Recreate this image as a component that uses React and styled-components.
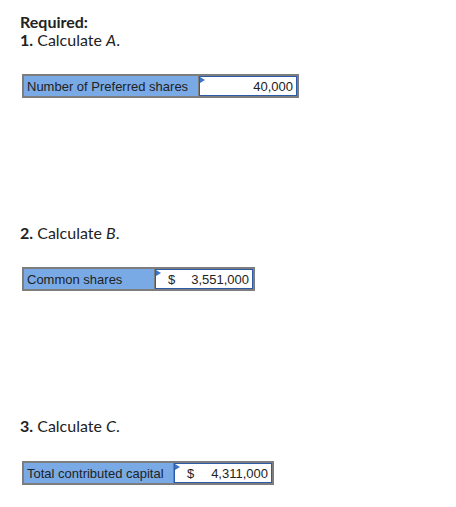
import React from "react";
import styled, { createGlobalStyle } from "styled-components";

const Global = createGlobalStyle`
  html, body { margin: 0; padding: 0; background: #fff; }
  body { font-family: Lato, "Open Sans", sans-serif; color: #222; }
`;

const Page = styled.div`
  width: 456px;
  height: 507px;
  padding: 13px 0 0 20px;
  box-sizing: border-box;
`;

const Line = styled.div`
  font-size: 16px;
  line-height: 18px;
  margin-top: ${(p) => p.$mt || 0}px;
`;

const Bold = styled.span`
  font-weight: 700;
`;

const Row = styled.div`
  display: flex;
  width: max-content;
  margin-top: ${(p) => p.$mt || 0}px;
  margin-left: 2px;
  border: 2px solid #7d7d7d;
  font-family: "Liberation Sans", Arial, sans-serif;
  font-size: 13px;
  color: #222;
  height: 20px;
`;

const Label = styled.div`
  width: ${(p) => p.$w}px;
  box-sizing: border-box;
  background: #79aae6;
  padding-left: 3px;
  display: flex;
  align-items: center;
  border-right: 1px solid #7d7d7d;
`;

const Input = styled.div`
  position: relative;
  width: 98px;
  box-sizing: border-box;
  border: 1px solid #2c5ba8;
  background: #fff;
  display: flex;
  align-items: center;
  padding: 0 3px 0 12px;
`;

const Flag = styled.span`
  position: absolute;
  left: 0;
  top: 0;
  width: 0;
  height: 0;
  border-top: 3px solid transparent;
  border-bottom: 3px solid transparent;
  border-left: 5px solid #3b74c4;
`;

const Dollar = styled.span``;

const Value = styled.span`
  margin-left: auto;
`;

function Field({ label, w, value, dollar, mt }) {
  return (
    <Row $mt={mt}>
      <Label $w={w}>{label}</Label>
      <Input>
        <Flag />
        {dollar && <Dollar>$</Dollar>}
        <Value>{value}</Value>
      </Input>
    </Row>
  );
}

export default function App() {
  return (
    <Page>
      <Global />
      <Line>
        <Bold>Required:</Bold>
      </Line>
      <Line>
        <Bold>1.</Bold> Calculate <i>A</i>.
      </Line>
      <Field label="Number of Preferred shares" w={175} value="40,000" mt={25} />
      <Line $mt={126}>
        <Bold>2.</Bold> Calculate <i>B</i>.
      </Line>
      <Field label="Common shares" w={131} value="3,551,000" dollar mt={25} />
      <Line $mt={126}>
        <Bold>3.</Bold> Calculate <i>C</i>.
      </Line>
      <Field label="Total contributed capital" w={150} value="4,311,000" dollar mt={26} />
    </Page>
  );
}
